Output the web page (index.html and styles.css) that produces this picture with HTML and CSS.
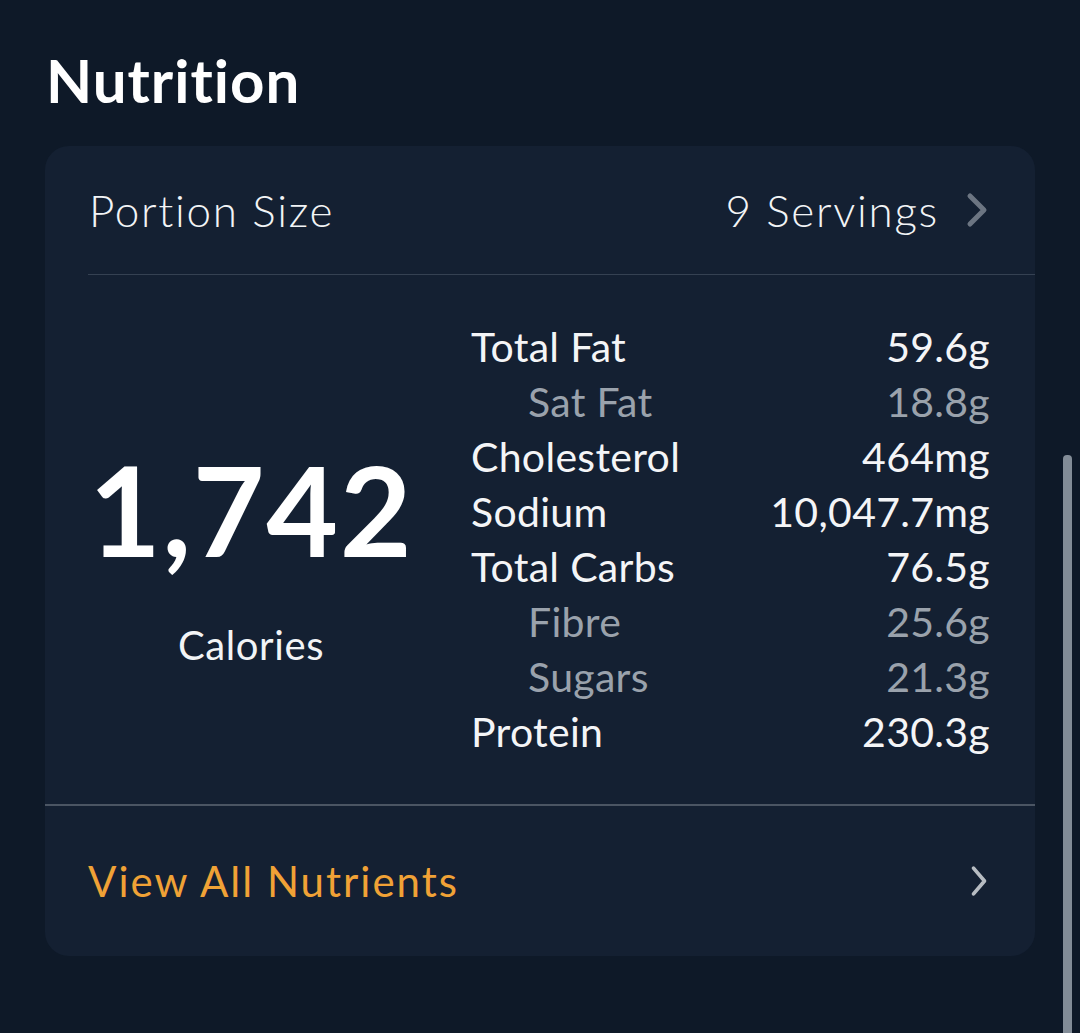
FILE: index.html
```html
<!DOCTYPE html>
<html>
<head>
<meta charset="utf-8">
<link rel="stylesheet" href="styles.css">
</head>
<body>
<div class="page">
  <h1 class="title">Nutrition</h1>
  <div class="card">
    <div class="portion">
      <span class="portion-label">Portion Size</span>
      <span class="portion-value">9 Servings
        <svg class="chev chev-dim" viewBox="0 0 24 36" width="24" height="36"><path d="M5 4 L19 18 L5 32" fill="none" stroke="currentColor" stroke-width="5" stroke-linecap="round" stroke-linejoin="round"/></svg>
      </span>
    </div>
    <div class="sep sep-inset"></div>
    <div class="facts">
      <div class="cal">
        <div class="cal-num">1,742</div>
        <div class="cal-label">Calories</div>
      </div>
      <div class="table">
        <div class="row"><span>Total Fat</span><span>59.6g</span></div>
        <div class="row sub"><span>Sat Fat</span><span>18.8g</span></div>
        <div class="row"><span>Cholesterol</span><span>464mg</span></div>
        <div class="row"><span>Sodium</span><span>10,047.7mg</span></div>
        <div class="row"><span>Total Carbs</span><span>76.5g</span></div>
        <div class="row sub"><span>Fibre</span><span>25.6g</span></div>
        <div class="row sub"><span>Sugars</span><span>21.3g</span></div>
        <div class="row"><span>Protein</span><span>230.3g</span></div>
      </div>
    </div>
    <div class="sep sep-full"></div>
    <div class="viewall">
      <span class="viewall-label">View All Nutrients</span>
      <svg class="chev chev-light" viewBox="0 0 24 36" width="22" height="34"><path d="M6 4 L18 18 L6 32" fill="none" stroke="currentColor" stroke-width="4" stroke-linecap="round" stroke-linejoin="round"/></svg>
    </div>
  </div>
</div>
<div class="scrollbar"></div>
</body>
</html>
```
FILE: styles.css
```css
* { box-sizing: border-box; }
html, body {
  margin: 0;
  padding: 0;
  background: #0e1928;
  height: 100%;
}
body {
  font-family: "Lato", "Noto Sans", sans-serif;
  color: #ffffff;
  overflow: hidden;
}
.page {
  padding: 44px 45px 0 45px;
}
.title {
  margin: 0 0 0 1px;
  font-size: 60px;
  font-weight: 700;
  line-height: 72px;
  letter-spacing: 1px;
}
.card {
  margin-top: 30px;
  width: 990px;
  background: #142032;
  border-radius: 24px;
  overflow: hidden;
}
.portion {
  height: 128px;
  display: flex;
  align-items: center;
  justify-content: space-between;
  padding: 0 46px 0 44px;
  font-size: 44px;
  font-weight: 300;
  letter-spacing: 1.7px;
  color: #f2f4f6;
}
.portion-value {
  display: flex;
  align-items: center;
  gap: 26px;
}
.chev { display: block; }
.chev-dim { color: #6c7582; }
.chev-light { color: #b7bcc2; }
.sep { height: 1px; background: #354152; }
.sep-inset { margin-left: 43px; }
.sep-full { height: 2px; background: #4b5563; }
.facts {
  display: flex;
  height: 529px;
  padding: 44px 45px 0 0;
}
.cal {
  width: 412px;
  display: flex;
  flex-direction: column;
  align-items: center;
  padding-top: 128px;
}
.cal-num {
  font-size: 124px;
  font-weight: 700;
  line-height: 124px;
  letter-spacing: 1.5px;
}
.cal-label {
  margin-top: 50px;
  font-size: 40px;
  font-weight: 400;
  line-height: 48px;
  letter-spacing: 0.6px;
  color: #f2f4f6;
}
.table {
  flex: 1;
  padding-left: 14px;
}
.row {
  display: flex;
  justify-content: space-between;
  height: 55px;
  align-items: center;
  font-size: 41px;
  font-weight: 400;
  letter-spacing: 0.3px;
  color: #f4f5f7;
}
.row.sub {
  color: #9aa2ac;
  padding-left: 57px;
}
.viewall {
  height: 150px;
  display: flex;
  align-items: center;
  justify-content: space-between;
  padding: 0 45px 0 43px;
}
.viewall-label {
  font-size: 42px;
  font-weight: 400;
  letter-spacing: 2px;
  color: #f0a236;
}
.scrollbar {
  position: absolute;
  left: 1063px;
  top: 455px;
  width: 9px;
  height: 600px;
  border-radius: 4px;
  background: #828c97;
}
```
